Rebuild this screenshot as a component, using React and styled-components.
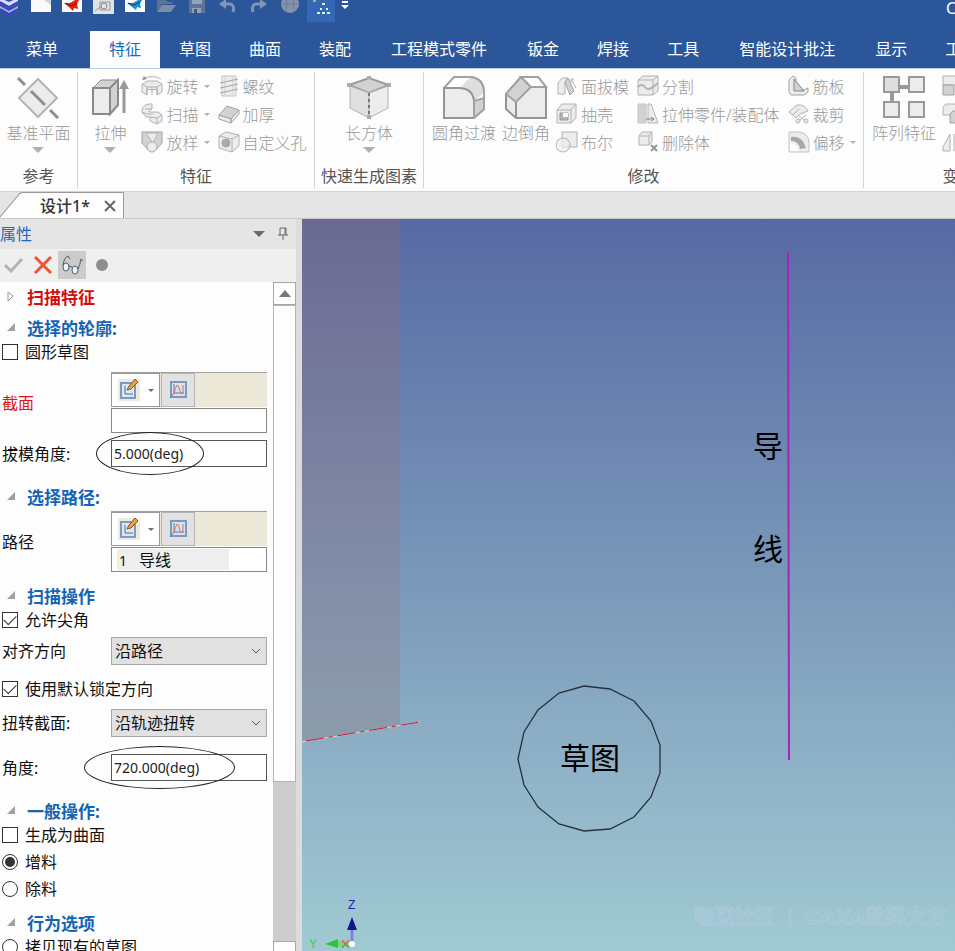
import React from "react";
import styled, { createGlobalStyle, css } from "styled-components";

const tabs = [
  { label: "特征", active: true },
  { label: "草图" },
  { label: "曲面" },
  { label: "装配" },
  { label: "工程模式零件", wide: true },
  { label: "钣金" },
  { label: "焊接" },
  { label: "工具" },
  { label: "智能设计批注", wide: true },
  { label: "显示" },
  { label: "工程图" },
];

const g = { fill: "#ececec", stroke: "#b2b2b2", strokeWidth: 1 };
const d = { fill: "#d2d2d2", stroke: "#a2a2a2", strokeWidth: 1 };

// small 22x22 ribbon icons
const smallIcons = {
  revolve: (
    <>
      <path d="M2 9 L6 6 H16 L21 9 V17 L16 20 V14 L11 15 L6 14 V20 L1 17 V9Z" {...g} />
      <path d="M1 9 L6 12 H11 V20 M11 12 H16 L21 9 M16 12 V20 M6 12 V20" {...g} fill="none" />
      <path d="M3 4 Q11 -1 20 4" {...g} fill="none" />
      <path d="M1 5 L3 1 L6 4Z" fill="#909090" />
    </>
  ),
  sweep: (
    <>
      <path d="M1 9 Q1 2 8 1 H11 V6 Q8 6 8 9 H17 L21 12 V18 L16 21 L9 18 V14 H5Z" {...g} />
      <path d="M1 9 L6 11 H12 M9 14 L16 15 L21 12 M16 15 V21 M4 6 L11 6" {...g} fill="none" />
    </>
  ),
  loft: (
    <>
      <path d="M1 1 H21 V12 L14 20 H8 L1 12Z" {...d} />
      <path d="M5 2 H17 L12 12Z" {...g} />
      <circle cx="11" cy="16" r="5" {...g} />
    </>
  ),
  thread: (
    <>
      <path d="M4 1 H18 V21 H4Z" {...g} stroke="#c4c4c4" />
      <path d="M7 1 V21 M15 1 V21" stroke="#d4d4d4" />
      <path d="M2 8 L20 4 M2 13 L20 9 M2 18 L20 14" {...g} fill="none" stroke="#a4a4a4" />
    </>
  ),
  thicken: (
    <>
      <path d="M1 12 L9 3 L21 7 L13 16Z" {...d} />
      <path d="M1 12 L13 16 V20 L1 16Z M13 16 L21 7 V11 L13 20Z" {...g} stroke="#a2a2a2" />
    </>
  ),
  hole: (
    <>
      <path d="M1 5 L8 1 L21 4 V15 L14 21 L1 17Z" {...g} />
      <path d="M1 5 L14 8 V21 M14 8 L21 4" {...g} fill="none" />
      <circle cx="8" cy="12" r="4" {...d} fill="#aaa" />
    </>
  ),
  draft: (
    <>
      <path d="M2 8 L6 3 H12 L9 7 V19 H2Z" {...g} />
      <path d="M9 7 L12 3 L18 16 L14 20Z" {...d} />
      <path d="M15 4 L20 13 M15 8 V4 H18" {...g} fill="none" />
    </>
  ),
  shell: (
    <>
      <path d="M1 7 L6 1 H20 V15 L15 20 H1Z" {...g} />
      <path d="M1 7 H15 V20 M15 7 L20 1" {...g} fill="none" />
      <path d="M4 10 H12 V17 H4Z" fill="#b4b4b4" stroke="#999" />
      <path d="M7 10 H12 V14 H7Z" fill="#fff" />
    </>
  ),
  boolean: (
    <>
      <path d="M6 1 H21 V16 H6Z" {...g} />
      <circle cx="7" cy="14" r="7" {...g} fillOpacity=".7" />
    </>
  ),
  split: (
    <>
      <path d="M1 5 L6 1 H21 V16 L16 20 H1Z" {...g} />
      <path d="M1 5 H16 V20 M16 5 L21 1" {...g} fill="none" />
      <path d="M1 12 Q5 8 8 12 T16 12 L21 8" {...g} fill="none" strokeWidth="2" />
    </>
  ),
  assembly: (
    <>
      <path d="M1 1 H9 V20 H1Z" {...d} stroke="#c4c4c4" />
      <path d="M11 1 H14 L21 20 H11Z" {...g} />
      <path d="M9 16 H17 M14 14 L17 16 L14 18" {...g} fill="none" stroke="#858585" />
    </>
  ),
  remove: (
    <>
      <path d="M2 5 L5 1 H15 V11 L12 14 H2Z" {...g} />
      <path d="M2 5 H12 V14 M12 5 L15 1" {...g} fill="none" />
      <path d="M14 14 L20 20 M20 14 L14 20" stroke="#959595" strokeWidth="2" />
    </>
  ),
  rib: (
    <>
      <path d="M1 5 L5 1 L8 3 V13 L16 15 L20 13 V17 L16 20 H3 L1 17Z" {...g} stroke="#a2a2a2" />
      <path d="M6 4 L16 16 H6Z" {...d} stroke="#858585" />
    </>
  ),
  trim: (
    <>
      <path d="M1 9 L9 2 Q17 1 20 8 L12 11 L8 15Z" {...g} />
      <path d="M5 12 L11 6 M10 12 L18 19 M18 12 L10 19" {...g} fill="none" />
      <circle cx="10" cy="18" r="2" {...g} />
      <circle cx="18" cy="18" r="2" {...g} />
    </>
  ),
  offset: (
    <>
      <path d="M1 1 H12 Q21 3 21 12 V21 H1Z" {...g} stroke="#c4c4c4" />
      <path d="M3 6 Q14 4 18 17 L12 18 Q11 10 3 10Z" fill="#a8a8a8" />
      <path d="M2 12 Q9 12 11 20 H2Z" fill="#fff" />
    </>
  ),
  mirror: (
    <>
      <path d="M1 16 L8 3 V20 H1Z M12 3 V20" {...g} />
    </>
  ),
  move: (
    <>
      <path d="M1 1 H20 V10 H1Z" {...g} />
      <path d="M1 10 H12 V20 H1Z" {...d} />
    </>
  ),
  copy: (
    <>
      <path d="M1 4 L4 1 H14 V9 L11 12 H1Z" {...g} />
      <path d="M8 11 L11 8 H21 V20 H8Z" {...d} />
    </>
  ),
};

// large 44x44 ribbon icons
const bigIcons = {
  plane: (
    <>
      <path d="M22 4 L41 23 L22 42 L3 23Z" {...g} strokeWidth="2" stroke="#b4b4b4" />
      <path d="M2 3 L9 10 M15 16 L29 30 M34 35 L42 43" stroke="#8f8f8f" strokeWidth="3" />
    </>
  ),
  extrude: (
    <>
      <path d="M5 13 L13 5 H30 L22 13Z" {...d} stroke="#8a8a8a" />
      <path d="M5 13 H22 V39 H5Z" {...g} stroke="#8a8a8a" strokeWidth="2" />
      <path d="M22 13 L30 5 V30 L22 39Z" {...d} stroke="#8a8a8a" strokeWidth="2" />
      <path d="M36 38 V12" stroke="#999" strokeWidth="3" />
      <path d="M36 5 L41 14 H31Z" fill="#999" />
    </>
  ),
  box: (
    <>
      <path d="M2 10 L22 3 L42 10 L22 18Z" {...d} stroke="#999" strokeWidth="2" />
      <path d="M3 11 L22 18 V43 L3 33Z" {...g} fill="#e0e0e0" />
      <path d="M41 11 L22 18 V43 L41 33Z" {...g} />
      <path d="M22 18 V42" stroke="#777" strokeWidth="2" strokeDasharray="3 3" />
      <path d="M0 8 h4 v4 h-4z M40 8 h4 v4 h-4z M20 1 h4 v3 h-4z M20 40 h4 v4 h-4z" fill="#aaa" />
    </>
  ),
  fillet: (
    <>
      <path d="M2 13 L12 2 H28 Q42 3 42 18 V34 L32 43 H2Z" {...g} fill="#fff" stroke="#a2a2a2" strokeWidth="2" />
      <path d="M18 13 L28 2 Q42 3 42 18 L32 26 Q31 14 18 13Z" fill="#dedede" />
      <path d="M28 2 Q42 3 42 18" {...g} fill="none" stroke="#a2a2a2" strokeWidth="2" />
      <path d="M2 13 H18 Q31 14 32 26 V43 H2Z" {...g} stroke="#959595" strokeWidth="2" />
      <path d="M32 26 L42 23 V34 L32 43Z" {...d} strokeWidth="2" />
    </>
  ),
  chamfer: (
    <>
      <path d="M2 19 L17 2 H34 L42 12 V43 H12 L2 34Z" {...g} stroke="#959595" strokeWidth="2" />
      <path d="M2 19 L17 2 L27 12 L12 27Z" {...d} strokeWidth="2" />
      <path d="M17 2 H34 L42 12 H27Z" {...g} fill="#fff" stroke="#a2a2a2" strokeWidth="2" />
      <path d="M12 27 V43" stroke="#959595" strokeWidth="2" />
    </>
  ),
  pattern: (
    <>
      <path d="M14 12 H30 M10 14 V28" stroke="#999" strokeWidth="4" />
      <path d="M2 2 H17 V17 H2Z" {...g} fill="#dedede" stroke="#999" strokeWidth="2" />
      <path d="M27 2 H42 V17 H27Z M2 27 H17 V42 H2Z M27 27 H42 V42 H27Z" {...g} stroke="#999" strokeWidth="2" />
    </>
  ),
};

const SmallTool = ({ icon, label, menu }) => (
  <SmallButton type="button" aria-label={label || icon}>
    <svg width="22" height="22" viewBox="0 0 22 22">
      {smallIcons[icon]}
    </svg>
    {label}
    {menu && <Caret $size={3} $left={2} />}
  </SmallButton>
);

const BigTool = ({ icon, label, menu }) => (
  <BigButton type="button">
    <svg width="44" height="44" viewBox="0 0 44 44">
      {bigIcons[icon]}
    </svg>
    <span>{label}</span>
    {menu && <Caret $size={6} />}
  </BigButton>
);

const Section = ({ title, top, closed }) => (
  <SectionTitle $top={top} $red={closed}>
    <svg width="9" height="11" viewBox="0 0 9 11">
      {closed ? (
        <path d="M1 1 L6 5 L1 10Z" fill="#fff" stroke="#999" />
      ) : (
        <path d="M8 1 V9 H0Z" fill="#a0a0a0" />
      )}
    </svg>
    {title}
  </SectionTitle>
);

const Picker = ({ label, item, top, red }) => (
  <Row $top={top} $red={red}>
    <span>{label}</span>
    <div>
      <PickerBar>
        <PickButton type="button" $wide aria-label="新建草图">
          <svg width="22" height="22" viewBox="0 0 22 22">
            <path d="M0 0 H22 V22 H0Z" fill="#eeeadc" />
            <path d="M3 4 H17 V19 H3Z" fill="#dbe7f5" stroke="#7c9ac0" strokeWidth="2" />
            <path d="M7 7 V15 H15" fill="none" stroke="#4d6d99" strokeWidth="1" />
            <path d="M9 11 L11 7 L17 0 L20 3 L13 10Z" fill="#e3a23c" stroke="#8a5b20" strokeWidth="1" />
          </svg>
          <Caret $size={3} $left={8} $dark />
        </PickButton>
        <PickButton type="button" aria-label="选择曲线">
          <svg width="18" height="18" viewBox="0 0 18 18">
            <path d="M2 1 H17 V16 H2Z" fill="#d6e2f0" stroke="#7c9ac0" strokeWidth="2" />
            <path d="M5 3 V12 H15 M1 17 L5 12" fill="none" stroke="#5f7da6" strokeWidth="1" />
            <path d="M5 13 Q8 -1 10 7 T14 12 V4" fill="none" stroke="#e0714f" strokeWidth="1" />
          </svg>
        </PickButton>
      </PickerBar>
      <PickList>{item && <li>{item}</li>}</PickList>
    </div>
  </Row>
);

const Choice = ({ label, top, ...rest }) => (
  <ChoiceLabel $top={top}>
    <Tick {...rest} />
    {label}
  </ChoiceLabel>
);

const Angle = ({ id, label, value, top, ring }) => (
  <Row $top={top}>
    <label htmlFor={id}>{label}</label>
    <FieldBox>
      <TextInput id={id} defaultValue={value} />
      <Ring $reach={ring[0]} $width={ring[1]} />
    </FieldBox>
  </Row>
);

const Choose = ({ id, label, value, top }) => (
  <Row $top={top}>
    <label htmlFor={id}>{label}</label>
    <FieldBox>
      <Select id={id} defaultValue={value}>
        <option>{value}</option>
      </Select>
      <Chevron width="10" height="6" viewBox="0 0 10 6">
        <path d="M1 1 L5 5 L9 1" fill="none" stroke="#555" />
      </Chevron>
    </FieldBox>
  </Row>
);

const QuickIcons = () => (
  <QuickBar>
    <QuickButton type="button" aria-label="CAXA">
      <svg width="20" height="16" viewBox="0 0 20 16">
        <path d="M0 -2 L9 2 L18 -2 V3 L9 8 L0 3Z" fill="#d9dcff" />
        <path d="M0 6 L9 11 L18 6 V10 L9 15 L0 10Z" fill="#a9adf5" />
        <path d="M0 2 L9 7 L18 2 M0 9 L9 14 L18 9" fill="none" stroke="#3a37c4" strokeWidth="2" />
      </svg>
    </QuickButton>
    <QuickButton type="button" aria-label="新建">
      <svg width="20" height="16" viewBox="0 0 20 16">
        <path d="M0 0 H20 V12 H0Z" fill="#fafafa" />
        <path d="M13 0 L20 5 V0Z" fill="#ccd3dd" />
      </svg>
    </QuickButton>
    <QuickButton type="button" aria-label="零件">
      <svg width="20" height="16" viewBox="0 0 20 16">
        <path d="M0 0 H20 V12 H0Z" fill="#fafafa" />
        <path d="M2 3 L8 3 L13 0 H17 L15 4 L16 9 L12 8 L11 11 L7 7Z" fill="#e3210f" />
        <path d="M3 3 L9 6 L15 3" fill="none" stroke="#8c1208" strokeWidth="1" />
      </svg>
    </QuickButton>
    <QuickButton type="button" aria-label="图纸">
      <svg width="21" height="16" viewBox="0 0 21 16">
        <path d="M0 0 H21 V14 H0Z" fill="#e2e2e2" />
        <path d="M2 11 L7 7 M7 2 H17 V10 H7Z" fill="none" stroke="#999" />
        <circle cx="11" cy="6" r="3" fill="none" stroke="#888" />
      </svg>
    </QuickButton>
    <QuickButton type="button" aria-label="装配">
      <svg width="20" height="16" viewBox="0 0 20 16">
        <path d="M0 0 H20 V12 H0Z" fill="#fafafa" />
        <path d="M2 3 L8 3 L13 0 H17 L15 4 L16 8 L12 7 L11 10 L7 7Z" fill="#1c8cd4" />
        <path d="M3 3 L9 5 L15 2" fill="none" stroke="#243b52" strokeWidth="1" />
      </svg>
    </QuickButton>
    <QuickButton type="button" aria-label="打开">
      <svg width="20" height="16" viewBox="0 0 20 16">
        <path d="M1 0 H10 L12 2 H16 V4 H6 L1 11Z" fill="#5c7399" />
        <path d="M6 5 H20 L15 12 H1Z" fill="#7d8da8" />
      </svg>
    </QuickButton>
    <QuickButton type="button" aria-label="保存">
      <svg width="20" height="16" viewBox="0 0 20 16">
        <path d="M2 0 H18 V13 H2Z" fill="#5e7396" />
        <path d="M5 0 H15 V4 H5Z M5 8 H14 V13 H5Z" fill="#93a2ba" />
        <path d="M7 9 H10 V13 H7Z" fill="#3f5880" />
      </svg>
    </QuickButton>
    <QuickButton type="button" aria-label="撤销">
      <svg width="20" height="16" viewBox="0 0 20 16">
        <path d="M8 -1 V9 L1 4Z" fill="#8295b5" />
        <path d="M6 4 H12 Q17 5 15 12" fill="none" stroke="#8295b5" strokeWidth="3" />
      </svg>
    </QuickButton>
    <QuickButton type="button" aria-label="重做">
      <svg width="20" height="16" viewBox="0 0 20 16">
        <path d="M11 -1 V9 L18 4Z" fill="#8295b5" />
        <path d="M13 4 H7 Q2 5 4 12" fill="none" stroke="#8295b5" strokeWidth="3" />
      </svg>
    </QuickButton>
    <QuickButton type="button" aria-label="渲染">
      <svg width="20" height="16" viewBox="0 0 20 16">
        <circle cx="10" cy="4" r="9" fill="#8492ac" />
        <path d="M1 4 H19 M6 0 Q8 4 6 11 M14 0 Q12 4 14 11" fill="none" stroke="#6a7c9c" />
      </svg>
    </QuickButton>
    <QuickButton type="button" $on aria-label="设计树">
      <svg width="28" height="22" viewBox="0 0 28 22">
        <path d="M6 0 h3 v2 h-3z" fill="#a8b85a" />
        <path
          d="M15 3 h3 v2 h-3z M13 8 h2 v2 h-2z M19 8 h2 v2 h-2z M10 12 h3 v2 h-3z M15 12 h3 v2 h-3z M20 12 h3 v2 h-3z"
          fill="#dff0f4"
        />
      </svg>
    </QuickButton>
    <QuickButton type="button" aria-label="更多">
      <svg width="8" height="10" viewBox="0 0 8 10">
        <path d="M1 1 H7 V3 H1Z M0 5 H8 L4 9Z" fill="#fff" />
      </svg>
    </QuickButton>
    <AppTitle>CAXA</AppTitle>
  </QuickBar>
);

const App = () => {
  return (
    <Page>
      <GlobalStyle />
      <QuickIcons />
      <TabBar>
        <MenuTab type="button">菜单</MenuTab>
        {tabs.map((t) => (
          <Tab key={t.label} type="button" $active={t.active} $wide={t.wide}>
            {t.label}
          </Tab>
        ))}
      </TabBar>
      <Ribbon>
        <Group $width={78}>
          <Tools>
            <BigTool icon="plane" label="基准平面" menu />
          </Tools>
          <GroupName>参考</GroupName>
        </Group>
        <Group $width={237}>
          <Tools>
            <BigTool icon="extrude" label="拉伸" menu />
            <Column $left={6}>
              <SmallTool icon="revolve" label="旋转" menu />
              <SmallTool icon="sweep" label="扫描" menu />
              <SmallTool icon="loft" label="放样" menu />
            </Column>
            <Column $left={8}>
              <SmallTool icon="thread" label="螺纹" />
              <SmallTool icon="thicken" label="加厚" />
              <SmallTool icon="hole" label="自定义孔" />
            </Column>
          </Tools>
          <GroupName>特征</GroupName>
        </Group>
        <Group $width={109}>
          <Tools>
            <BigTool icon="box" label="长方体" menu />
          </Tools>
          <GroupName>快速生成图素</GroupName>
        </Group>
        <Group $width={440}>
          <Tools $start>
            <BigTool icon="fillet" label="圆角过渡" />
            <BigTool icon="chamfer" label="边倒角" />
            <Column $left={3}>
              <SmallTool icon="draft" label="面拔模" />
              <SmallTool icon="shell" label="抽壳" />
              <SmallTool icon="boolean" label="布尔" />
            </Column>
            <Column $left={8}>
              <SmallTool icon="split" label="分割" />
              <SmallTool icon="assembly" label="拉伸零件/装配体" />
              <SmallTool icon="remove" label="删除体" />
            </Column>
            <Column $left={8}>
              <SmallTool icon="rib" label="筋板" />
              <SmallTool icon="trim" label="裁剪" />
              <SmallTool icon="offset" label="偏移" menu />
            </Column>
          </Tools>
          <GroupName>修改</GroupName>
        </Group>
        <Group $width={190}>
          <Tools $start>
            <BigTool icon="pattern" label="阵列特征" />
            <Column $left={3}>
              <SmallTool icon="move" />
              <SmallTool icon="copy" />
              <SmallTool icon="mirror" />
            </Column>
          </Tools>
          <GroupName>变换</GroupName>
        </Group>
      </Ribbon>
      <DocBar>
        <DocTab>
          <svg width="22" height="26" viewBox="0 0 22 26">
            <path d="M22 0 V26 H0Z" fill="#fdfdfd" />
            <path d="M0 25 L20 1 H22" fill="none" stroke="#888" />
          </svg>
          <DocName>
            设计1*
            <CloseButton type="button" aria-label="关闭">
              <svg width="12" height="12" viewBox="0 0 12 12">
                <path d="M1 1 L11 11 M11 1 L1 11" stroke="#666" strokeWidth="2" />
              </svg>
            </CloseButton>
          </DocName>
        </DocTab>
      </DocBar>
      <Main>
        <Side>
          <SideHead>
            <SideTitle>属性</SideTitle>
            <Caret $size={6} $dark />
            <svg width="12" height="14" viewBox="0 0 12 14">
              <path d="M3 1 H9 V8 M3 1 V8 M1 8 H11 M6 8 V13 M8 1 V8" fill="none" stroke="#666" strokeWidth="1" />
            </svg>
          </SideHead>
          <SideTools>
            <SideButton type="button" aria-label="确定">
              <svg width="20" height="16" viewBox="0 0 20 16">
                <path d="M1 8 L7 14 L18 2" fill="none" stroke="#b4b4b4" strokeWidth="3" />
              </svg>
            </SideButton>
            <SideButton type="button" aria-label="取消">
              <svg width="18" height="18" viewBox="0 0 18 18">
                <path d="M1 1 L17 17 M17 1 L1 17" stroke="#ef5436" strokeWidth="3" />
              </svg>
            </SideButton>
            <SideButton type="button" $on aria-label="预览">
              <svg width="22" height="20" viewBox="0 0 22 20">
                <ellipse cx="5" cy="12" rx="3" ry="4" fill="#e8ffff" stroke="#556" />
                <ellipse cx="14" cy="15" rx="3" ry="4" fill="#e8ffff" stroke="#556" />
                <path d="M2 10 Q3 3 7 1 L9 4 M8 11 L11 12 M17 14 Q19 10 20 4 L22 6" fill="none" stroke="#556" />
              </svg>
            </SideButton>
            <SideButton type="button" aria-label="应用">
              <svg width="12" height="12" viewBox="0 0 12 12">
                <circle cx="6" cy="6" r="6" fill="#8e8e8e" />
              </svg>
            </SideButton>
          </SideTools>
          <SideBody>
            <Form>
              <Section title="扫描特征" closed top={5} />
              <Section title="选择的轮廓:" top={9} />
              <Choice type="checkbox" label="圆形草图" />
              <Picker label="截面" top={8} red />
              <Angle id="draft" label="拔模角度:" value="5.000(deg)" top={7} ring={[-15, 108]} />
              <Section title="选择路径:" top={20} />
              <Picker
                label="路径"
                top={2}
                item={
                  <>
                    <b>1</b>导线
                  </>
                }
              />
              <Section title="扫描操作" top={14} />
              <Choice type="checkbox" label="允许尖角" defaultChecked />
              <Choose id="align" label="对齐方向" value="沿路径" top={5} />
              <Choice type="checkbox" label="使用默认锁定方向" defaultChecked top={12} />
              <Choose id="twist" label="扭转截面:" value="沿轨迹扭转" top={8} />
              <Angle id="angle" label="角度:" value="720.000(deg)" top={17} ring={[-27, 151]} />
              <Section title="一般操作:" top={20} />
              <Choice type="checkbox" label="生成为曲面" />
              <Choice type="radio" name="material" label="增料" defaultChecked top={3} />
              <Choice type="radio" name="material" label="除料" top={3} />
              <Section title="行为选项" top={12} />
              <Choice type="radio" name="behavior" label="拷贝现有的草图" />
            </Form>
            <ScrollBar>
              <ScrollButton type="button" aria-label="向上">
                <svg width="12" height="7" viewBox="0 0 12 7">
                  <path d="M0 7 L6 0 L12 7Z" fill="#777" />
                </svg>
              </ScrollButton>
              <Track>
                <Thumb />
              </Track>
              <ScrollEnd type="button" aria-label="向下" />
            </ScrollBar>
          </SideBody>
        </Side>
        <Viewport>
          <Scene width="653" height="732" viewBox="0 0 653 732">
            <defs>
              <linearGradient id="plane" x1="0" y1="0" x2="0" y2="1">
                <stop offset="0" stopColor="#6a6992" />
                <stop offset=".7" stopColor="#838ea8" />
                <stop offset="1" stopColor="#8c9cab" />
              </linearGradient>
            </defs>
            <path d="M0 0 H98 V507 L0 522Z" fill="url(#plane)" />
            <path d="M0 523 L118 503" stroke="#d9cdd3" />
            <path d="M4 522 L118 503" stroke="#c81830" strokeDasharray="18 5 4 5" />
            <path d="M486 33 L487 541" stroke="#a525b8" strokeWidth="2" />
            <path
              d="M282 467 L308 470 L332 482 L349 502 L358 526 V554 L349 578 L332 598 L308 610 L282 612 L257 605 L236 588 L222 566 L216 540 L222 513 L236 491 L257 474Z"
              fill="none"
              stroke="#25323b"
              strokeWidth="1.3"
            />
            <path d="M50 724 V708" stroke="#8080e0" strokeWidth="3" />
            <path d="M50 698 L55 711 H45Z" fill="#14148c" />
            <path d="M23 725 L36 720 V729Z" fill="#2fc23c" />
            <path d="M36 722 H48 V728 H36Z" fill="#7bd489" />
            <path d="M40 721 L47 729 M47 721 L40 729" stroke="#d33" />
            <circle cx="50" cy="725" r="3" fill="#fff" />
          </Scene>
          <Note $x={451} $y={207}>导</Note>
          <Note $x={451} $y={310}>线</Note>
          <Note $x={258} $y={519}>草图</Note>
          <AxisName $x={46} $y={678} $color="#1c1cb0">Z</AxisName>
          <AxisName $x={7} $y={717} $color="#35d04a">Y</AxisName>
          <Watermark>
            <span>咖迷社区</span>
            <span>|</span>
            <span>
              <i>CAXA</i>数码大方
            </span>
          </Watermark>
        </Viewport>
      </Main>
    </Page>
  );
};

const GlobalStyle = createGlobalStyle`
  * {
    box-sizing: border-box;
  }
  body {
    margin: 0;
    overflow: hidden;
  }
  body, button, input, select {
    font-family: "Noto Sans", "Noto Sans CJK SC", sans-serif;
    font-size: 16px;
  }
  button {
    padding: 0;
    border: none;
    background: none;
    color: inherit;
  }
  svg {
    display: block;
    flex-shrink: 0;
  }
`;

const Page = styled.div`
  display: flex;
  flex-direction: column;
  height: 100vh;
  overflow: hidden;
  line-height: 24px;
`;

const QuickBar = styled.div`
  display: flex;
  align-items: flex-start;
  gap: 11px;
  height: 31px;
  flex-shrink: 0;
  background: #2b579a;
  overflow: hidden;
`;

const QuickButton = styled.button`
  display: block;
  flex-shrink: 0;
  ${(p) =>
    p.$on &&
    css`
      background: #3468b4;
      margin: 0 -5px 0 -4px;
    `}
`;

const AppTitle = styled.span`
  width: 9px;
  margin-left: auto;
  color: white;
  line-height: 16px;
`;

const TabBar = styled.div`
  display: flex;
  height: 37px;
  flex-shrink: 0;
  background: #2b579a;
  color: white;
  overflow: hidden;
`;

const Tab = styled.button`
  flex-shrink: 0;
  padding: 0 ${(p) => (p.$wide ? 21 : 19)}px 4px;
  ${(p) =>
    p.$active &&
    css`
      background: #fdfdfd;
      color: #1c6abf;
    `}
`;

const MenuTab = styled(Tab)`
  padding: 0 32px 4px 26px;
`;

const Ribbon = styled.div`
  display: flex;
  height: 124px;
  flex-shrink: 0;
  padding-top: 3px;
  border-top: 1px solid #b9cbe8;
  border-bottom: 1px solid #d2d2d2;
  background: #fdfdfd;
  overflow: hidden;
`;

const Group = styled.div`
  display: flex;
  flex-direction: column;
  flex: 0 0 ${(p) => p.$width}px;
  margin-bottom: 3px;
  border-right: 1px solid #d4d4d4;
`;

const Tools = styled.div`
  display: flex;
  justify-content: ${(p) => (p.$start ? "flex-start" : "center")};
  flex: 1;
  padding-left: ${(p) => (p.$start ? 5 : 0)}px;
  color: #999;
`;

const GroupName = styled.div`
  text-align: center;
  color: #555;
`;

const BigButton = styled.button`
  display: flex;
  flex-direction: column;
  align-items: center;
  gap: 2px;
  padding: 3px 3px 0;
  font-weight: 300;
  line-height: 24px;
`;

const Column = styled.div`
  display: flex;
  flex-direction: column;
  margin-left: ${(p) => p.$left}px;
`;

const SmallButton = styled.button`
  display: flex;
  align-items: center;
  gap: 3px;
  height: 28px;
  font-weight: 300;
  white-space: nowrap;
`;

const Caret = styled.span`
  width: 0;
  height: 0;
  margin-left: ${(p) => p.$left || 0}px;
  border: ${(p) => p.$size}px solid transparent;
  border-top-color: ${(p) => (p.$dark ? "#6a6a6a" : "#b0b0b0")};
  border-bottom: none;
`;

const DocBar = styled.div`
  display: flex;
  align-items: flex-end;
  height: 27px;
  flex-shrink: 0;
  background: #e5e5e5;
  border-bottom: 1px solid #c8c8c8;
`;

const DocTab = styled.div`
  display: flex;
`;

const DocName = styled.div`
  display: flex;
  align-items: center;
  gap: 14px;
  padding: 0 7px 0 18px;
  border-top: 1px solid #999;
  border-right: 1px solid #999;
  background: #fdfdfd;
  color: #333;
  font-weight: 500;
`;

const CloseButton = styled.button`
  display: block;
`;

const Main = styled.div`
  display: flex;
  flex: 1;
  min-height: 0;
`;

const Side = styled.div`
  display: flex;
  flex-direction: column;
  width: 302px;
  flex-shrink: 0;
  padding-right: 6px;
  background: #dcdcdc;
`;

const SideHead = styled.div`
  display: flex;
  align-items: center;
  gap: 12px;
  height: 30px;
  flex-shrink: 0;
  padding-right: 7px;
  background: #e5e5e5;
`;

const SideTitle = styled.div`
  flex: 1;
  color: #1c6abf;
`;

const SideTools = styled.div`
  display: flex;
  align-items: center;
  height: 33px;
  flex-shrink: 0;
  padding-bottom: 2px;
  background: #efefef;
`;

const SideButton = styled.button`
  display: flex;
  align-items: center;
  justify-content: center;
  width: 28px;
  height: 28px;
  margin-right: ${(p) => (p.$on ? 2 : 1)}px;
  background: ${(p) => (p.$on ? "#cbcbcb" : "none")};
`;

const SideBody = styled.div`
  display: flex;
  flex: 1;
  min-height: 0;
  background: #fdfdfd;
`;

const Form = styled.form`
  flex: 1;
  min-width: 0;
  overflow: hidden;
`;

const SectionTitle = styled.div`
  display: flex;
  gap: 11px;
  margin-top: ${(p) => p.$top}px;
  padding-left: 7px;
  font-size: 17px;
  font-weight: 700;
  line-height: 22px;
  color: ${(p) => (p.$red ? "#d40c0c" : "#1464b4")};
  svg {
    margin-top: 4px;
  }
`;

const Row = styled.div`
  display: grid;
  grid-template-columns: 109px 1fr;
  align-items: center;
  margin-top: ${(p) => p.$top}px;
  padding: 0 6px 0 2px;
  color: ${(p) => (p.$red ? "#e01515" : "#111")};
`;

const FieldBox = styled.div`
  position: relative;
`;

const TextInput = styled.input`
  display: block;
  width: 100%;
  height: 27px;
  padding: 0 2px;
  border: 1px solid #555;
  border-radius: 0;
  background: white;
  color: #222;
  font-size: 14px;
`;

// hand-drawn style mark around a value
const Ring = styled.span`
  position: absolute;
  top: -8px;
  left: ${(p) => p.$reach}px;
  width: ${(p) => p.$width}px;
  height: 43px;
  border: 1px solid #222;
  border-radius: 50%;
  pointer-events: none;
`;

const Select = styled.select`
  display: block;
  appearance: none;
  width: 100%;
  height: 28px;
  padding: 0 3px;
  border: 1px solid #a8a8a8;
  border-radius: 0;
  background: #e1e1e1;
  color: #111;
`;

const Chevron = styled.svg`
  position: absolute;
  top: 11px;
  right: 6px;
  pointer-events: none;
`;

const PickerBar = styled.div`
  display: flex;
  gap: 1px;
  height: 35px;
  background: #ece9d8;
  border-top: 1px solid #a0a0a0;
`;

const PickButton = styled.button`
  display: flex;
  align-items: center;
  justify-content: center;
  width: ${(p) => (p.$wide ? 49 : 34)}px;
  border: ${(p) => (p.$wide ? "1px solid #999" : "1px solid #b4b4b4")};
  background: ${(p) => (p.$wide ? "#fff" : "#e1e1e1")};
`;

const PickList = styled.ul`
  height: 25px;
  margin: 1px 0 0;
  padding: 1px 37px 1px 5px;
  border: 1px solid #888;
  background: white;
  list-style: none;
  li {
    height: 21px;
    padding-left: 2px;
    line-height: 23px;
    background: #eee;
  }
  b {
    margin-right: 12px;
    font-weight: 400;
    font-size: 14px;
  }
`;

const ChoiceLabel = styled.label`
  display: flex;
  align-items: center;
  gap: 7px;
  height: 24px;
  margin-top: ${(p) => p.$top || 0}px;
  padding-left: 2px;
  color: #111;
  white-space: nowrap;
`;

const Tick = styled.input`
  appearance: none;
  display: grid;
  place-items: center;
  flex-shrink: 0;
  width: 16px;
  height: 16px;
  margin: 0;
  border: 1px solid #333;
  border-radius: ${(p) => (p.type === "radio" ? "50%" : "0")};
  background: white;
  &:checked::after {
    content: "";
    ${(p) =>
      p.type === "radio"
        ? css`
            width: 10px;
            height: 10px;
            border-radius: 50%;
            background: #333;
          `
        : css`
            width: 11px;
            height: 6px;
            margin-bottom: 3px;
            border: solid #333;
            border-width: 0 0 1px 1px;
            transform: rotate(-45deg);
          `}
  }
`;

const ScrollBar = styled.div`
  display: flex;
  flex-direction: column;
  width: 23px;
  overflow: hidden;
`;

const ScrollButton = styled.button`
  display: flex;
  align-items: center;
  justify-content: center;
  height: 23px;
  flex-shrink: 0;
  border: 1px solid #a8a8a8;
  background: #fdfdfd;
`;

const ScrollEnd = styled(ScrollButton)`
  margin-bottom: -13px;
`;

const Track = styled.div`
  flex: 1;
  background: #cdcdcd;
`;

const Thumb = styled.div`
  height: 75%;
  border: 1px solid #b4b4b4;
  background: #fdfdfd;
`;

const Viewport = styled.div`
  position: relative;
  flex: 1;
  min-width: 0;
  overflow: hidden;
  background: linear-gradient(#576aa3, #6c86b1 30%, #7b9aba 51%, #91b5c9 78%, #a0cad2);
`;

const Scene = styled.svg`
  position: absolute;
  top: 0;
  left: 0;
`;

const Note = styled.span`
  position: absolute;
  left: ${(p) => p.$x}px;
  top: ${(p) => p.$y}px;
  font-size: 30px;
  line-height: 40px;
  white-space: nowrap;
  color: black;
`;

const AxisName = styled.span`
  position: absolute;
  left: ${(p) => p.$x}px;
  top: ${(p) => p.$y}px;
  font-family: "Liberation Sans", sans-serif;
  font-size: 12px;
  line-height: 16px;
  color: ${(p) => p.$color};
`;

const Watermark = styled.div`
  position: absolute;
  right: 9px;
  bottom: 20px;
  display: flex;
  gap: 10px;
  font-size: 20px;
  font-weight: 700;
  line-height: 28px;
  white-space: nowrap;
  color: transparent;
  -webkit-text-stroke: 1px rgba(196, 208, 236, 0.45);
  i {
    font-family: "DejaVu Sans", sans-serif;
  }
`;

export default App;
